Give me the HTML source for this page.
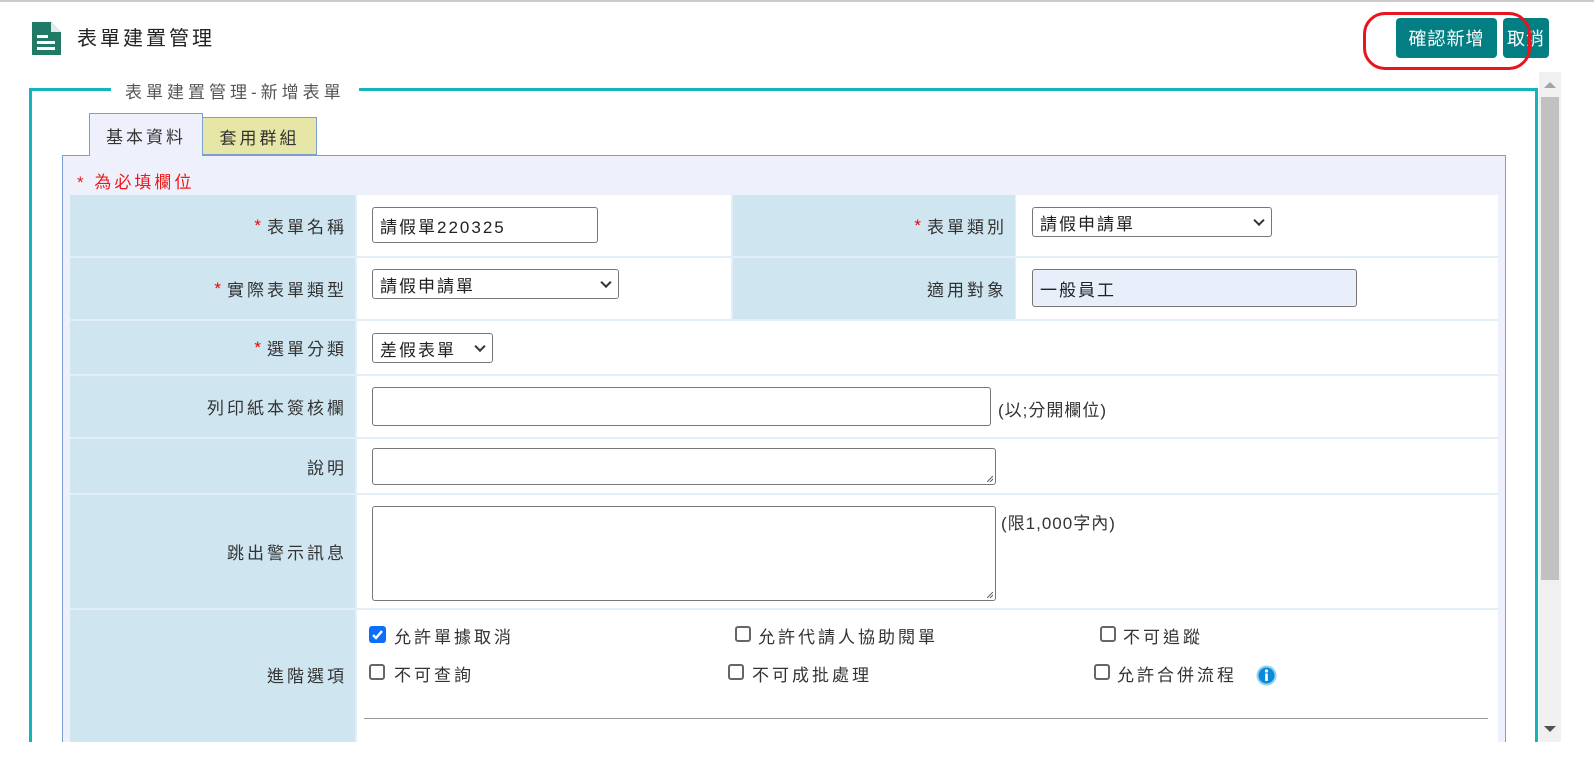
<!DOCTYPE html>
<html><head><meta charset="utf-8"><style>
*{box-sizing:border-box;margin:0;padding:0}
body{width:1594px;height:772px;background:#fff;position:relative;overflow:hidden;font-family:"Liberation Sans","Noto Sans CJK TC",sans-serif;font-size:17px;color:#333}
.a{position:absolute}
.lbl{position:absolute;background:#cfe6f0;text-align:right;padding-right:8px;display:flex;align-items:center;justify-content:flex-end;color:#333;letter-spacing:3px}
.val{position:absolute;background:#fff}
.r{color:#e00;margin-right:6px;letter-spacing:0}
.inp{position:absolute;border:1px solid #777;border-radius:3px;background:#fff;padding-left:7px;display:flex;align-items:center;color:#222;font-size:17px;letter-spacing:2px}
.chev{position:absolute;right:8px;top:50%;width:8px;height:8px;border-right:2px solid #333;border-bottom:2px solid #333;transform:translateY(-70%) rotate(45deg)}
.cb{position:absolute;width:16px;height:16px;border:2px solid #666;border-radius:3px;background:#fff}
.ct{position:absolute;color:#333;letter-spacing:3px}
.rs{position:absolute;width:6px;height:6px;right:2px;bottom:2px;background:linear-gradient(135deg,transparent 45%,#666 45%,#666 55%,transparent 55%,transparent 70%,#666 70%,#666 80%,transparent 80%)}
</style></head><body>
<div class="a" style="left:0;top:0;width:1594px;height:2px;background:#ccc"></div>
<svg class="a" style="left:32px;top:22px" width="30" height="33" viewBox="0 0 30 33"><path d="M0 0H19L29 10V33H0Z" fill="#217a66"/><path d="M19 0V10H29" fill="#fff" opacity=".85"/><rect x="5" y="13" width="11" height="3" fill="#fff"/><rect x="5" y="19" width="18" height="3" fill="#fff"/><rect x="5" y="25" width="18" height="3" fill="#fff"/></svg>
<div class="a" style="left:77px;top:22px;font-size:20px;color:#222;letter-spacing:3px">表單建置管理</div>
<div class="a" style="left:1396px;top:18px;width:101px;height:40px;background:#037f83;border-radius:4px;color:#fff;font-size:18px;display:flex;align-items:center;justify-content:center;letter-spacing:1px">確認新增</div>
<div class="a" style="left:1503px;top:18px;width:46px;height:40px;background:#037f83;border-radius:4px;color:#fff;font-size:18px;display:flex;align-items:center;justify-content:center;letter-spacing:1px">取消</div>
<div class="a" style="left:1363px;top:12px;width:168px;height:58px;border:3px solid #e8141e;border-radius:22px"></div>
<!-- scrollbar -->
<div class="a" style="left:1539px;top:72px;width:22px;height:670px;background:#f0f0f0"></div>
<div class="a" style="left:1541px;top:97px;width:18px;height:483px;background:#c1c1c1"></div>
<div class="a" style="left:1544px;top:82px;width:0;height:0;border-left:6px solid transparent;border-right:6px solid transparent;border-bottom:6px solid #a3a3a3"></div>
<div class="a" style="left:1544px;top:726px;width:0;height:0;border-left:6px solid transparent;border-right:6px solid transparent;border-top:6px solid #505050"></div>
<!-- fieldset -->
<div class="a" style="left:29px;top:88px;width:1509px;height:654px;border:3px solid #14b4bc;border-bottom:none"></div>
<div class="a" style="left:111px;top:78px;padding:0 14px;background:#fff;font-size:17px;color:#555;letter-spacing:4px">表單建置管理-新增表單</div>
<div class="a" style="left:62px;top:155px;width:1444px;height:587px;background:#eef0fc;border:1px solid #7a9fcf;border-bottom:none"></div>
<div class="a" style="left:89px;top:113px;width:114px;height:43px;background:#eef0fc;border:1px solid #7a9fcf;border-bottom:none;display:flex;align-items:center;justify-content:center;letter-spacing:3px">基本資料</div>
<div class="a" style="left:202px;top:117px;width:115px;height:38px;background:#e6e6a6;border:1px solid #7a9fcf;display:flex;align-items:center;justify-content:center;letter-spacing:3px">套用群組</div>
<div class="a" style="left:77px;top:168px;color:#f01818;letter-spacing:3px">* 為必填欄位</div>
<div class="a" style="left:70px;top:195px;width:1428px;height:547px;background:#e2eff6"></div>
<!-- row1 -->
<div class="lbl" style="left:70px;top:195px;width:285px;height:61px"><span class="r">*</span>表單名稱</div>
<div class="val" style="left:357px;top:195px;width:374px;height:61px"></div>
<div class="inp" style="left:372px;top:207px;width:226px;height:36px">請假單220325</div>
<div class="lbl" style="left:733px;top:195px;width:282px;height:61px"><span class="r">*</span>表單類別</div>
<div class="val" style="left:1016px;top:195px;width:482px;height:61px"></div>
<div class="inp" style="left:1032px;top:207px;width:240px;height:30px">請假申請單<span class="chev"></span></div>
<!-- row2 -->
<div class="lbl" style="left:70px;top:258px;width:285px;height:61px"><span class="r">*</span>實際表單類型</div>
<div class="val" style="left:357px;top:258px;width:374px;height:61px"></div>
<div class="inp" style="left:372px;top:269px;width:247px;height:30px">請假申請單<span class="chev"></span></div>
<div class="lbl" style="left:733px;top:258px;width:282px;height:61px">適用對象</div>
<div class="val" style="left:1016px;top:258px;width:482px;height:61px"></div>
<div class="inp" style="left:1032px;top:269px;width:325px;height:38px;background:#e8effb">一般員工</div>
<!-- row3 -->
<div class="lbl" style="left:70px;top:321px;width:285px;height:53px"><span class="r">*</span>選單分類</div>
<div class="val" style="left:357px;top:321px;width:1141px;height:53px"></div>
<div class="inp" style="left:372px;top:333px;width:121px;height:30px">差假表單<span class="chev"></span></div>
<!-- row4 -->
<div class="lbl" style="left:70px;top:376px;width:285px;height:61px">列印紙本簽核欄</div>
<div class="val" style="left:357px;top:376px;width:1141px;height:61px"></div>
<div class="inp" style="left:372px;top:387px;width:619px;height:39px"></div>
<div class="a" style="left:998px;top:396px;color:#333;letter-spacing:1px">(以;分開欄位)</div>
<!-- row5 -->
<div class="lbl" style="left:70px;top:439px;width:285px;height:54px">說明</div>
<div class="val" style="left:357px;top:439px;width:1141px;height:54px"></div>
<div class="inp" style="left:372px;top:448px;width:624px;height:37px"><span class="rs"></span></div>
<!-- row6 -->
<div class="lbl" style="left:70px;top:495px;width:285px;height:113px">跳出警示訊息</div>
<div class="val" style="left:357px;top:495px;width:1141px;height:113px"></div>
<div class="inp" style="left:372px;top:506px;width:624px;height:95px"><span class="rs"></span></div>
<div class="a" style="left:1001px;top:509px;color:#333;letter-spacing:1px">(限1,000字內)</div>
<!-- row7 -->
<div class="lbl" style="left:70px;top:610px;width:285px;height:132px;padding-bottom:4px">進階選項</div>
<div class="val" style="left:357px;top:610px;width:1141px;height:132px"></div>
<div class="a" style="left:369px;top:626px;width:17px;height:17px;background:#0d6efd;border-radius:3px"></div>
<svg class="a" style="left:371px;top:628px" width="13" height="13" viewBox="0 0 13 13"><path d="M2 7L5 10L11 3" stroke="#fff" stroke-width="2.4" fill="none"/></svg>
<div class="ct" style="left:394px;top:623px">允許單據取消</div>
<div class="cb" style="left:735px;top:626px"></div><div class="ct" style="left:758px;top:623px">允許代請人協助閱單</div>
<div class="cb" style="left:1100px;top:626px"></div><div class="ct" style="left:1123px;top:623px">不可追蹤</div>
<div class="cb" style="left:369px;top:664px"></div><div class="ct" style="left:394px;top:661px">不可查詢</div>
<div class="cb" style="left:728px;top:664px"></div><div class="ct" style="left:752px;top:661px">不可成批處理</div>
<div class="cb" style="left:1094px;top:664px"></div><div class="ct" style="left:1117px;top:661px">允許合併流程</div>
<svg class="a" style="left:1256px;top:665px" width="21" height="21" viewBox="0 0 21 21"><circle cx="10.5" cy="10.5" r="10" fill="#8fd3f5"/><circle cx="10.5" cy="10.5" r="8" fill="#0a8ad8"/><circle cx="10.5" cy="6" r="1.6" fill="#fff"/><rect x="9.2" y="8.5" width="2.6" height="7.5" fill="#fff"/></svg>
<div class="a" style="left:364px;top:718px;width:1124px;height:1px;background:#999"></div>
</body></html>
